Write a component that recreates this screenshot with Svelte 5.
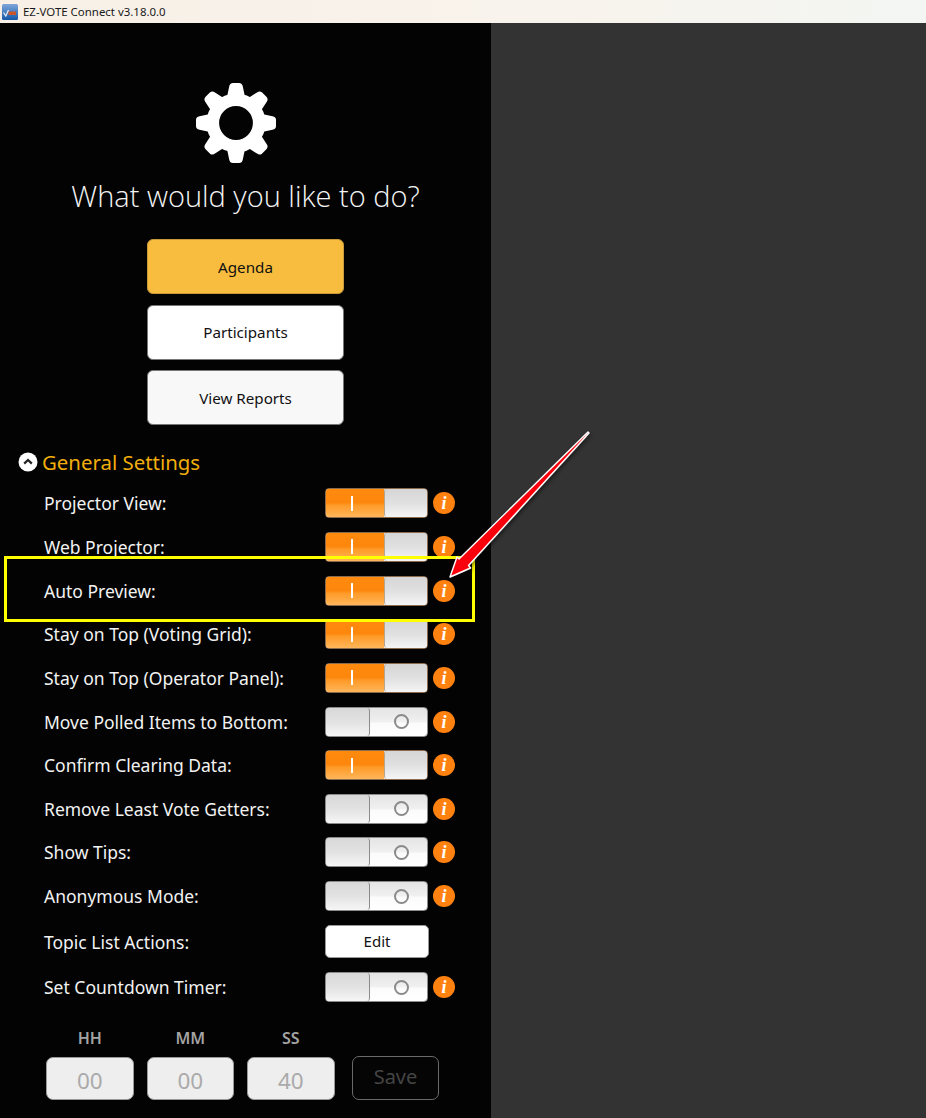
<script>
  const actions = [
    { label: 'Agenda', tone: 'amber' },
    { label: 'Participants', tone: 'white' },
    { label: 'View Reports', tone: 'pale' }
  ];

  const settings = [
    { label: 'Projector View:', on: true },
    { label: 'Web Projector:', on: true },
    { label: 'Auto Preview:', on: true },
    { label: 'Stay on Top (Voting Grid):', on: true },
    { label: 'Stay on Top (Operator Panel):', on: true },
    { label: 'Move Polled Items to Bottom:', on: false },
    { label: 'Confirm Clearing Data:', on: true },
    { label: 'Remove Least Vote Getters:', on: false },
    { label: 'Show Tips:', on: false },
    { label: 'Anonymous Mode:', on: false },
    { label: 'Topic List Actions:', edit: true },
    { label: 'Set Countdown Timer:', on: false }
  ];

  const timer = [
    { unit: 'HH', value: '00' },
    { unit: 'MM', value: '00' },
    { unit: 'SS', value: '40' }
  ];

  const teeth = [0, 45, 90, 135, 180, 225, 270, 315];
</script>

<div class="window">
  <header class="titlebar">
    <svg class="app-icon" viewBox="0 0 16 16" width="16" height="16">
      <defs>
        <linearGradient id="appBlue" x1="0" y1="0" x2="0" y2="1">
          <stop offset="0" stop-color="#7ea6da" />
          <stop offset="1" stop-color="#1458a8" />
        </linearGradient>
      </defs>
      <rect width="16" height="16" rx="1.5" fill="url(#appBlue)" />
      <rect x="6.5" y="7.5" width="7.5" height="3.5" fill="#c9562c" />
      <path d="M1.5 8.5 L3.8 12 L6.5 6" fill="none" stroke="#e8f0fa" stroke-width="1.2" />
    </svg>
    <span>EZ-VOTE Connect v3.18.0.0</span>
  </header>

  <div class="content">
    <aside class="panel">
      <svg class="gear" viewBox="-40 -40 80 80" width="80" height="80">
        {#each teeth as angle}
          <path
            d="M-9 -26 L-6.8 -36.5 Q-6.2 -40 -3 -40 L3 -40 Q6.2 -40 6.8 -36.5 L9 -26 Z"
            fill="#fff"
            transform="rotate({angle})"
          />
        {/each}
        <circle r="23.2" fill="none" stroke="#fff" stroke-width="12.6" />
      </svg>

      <h1>What would you like to do?</h1>

      <div class="actions">
        {#each actions as action}
          <button class="action {action.tone}">{action.label}</button>
        {/each}
      </div>

      <h2 class="section">
        <svg viewBox="0 0 20 20" width="20" height="20">
          <circle cx="10" cy="10" r="9.5" fill="#fff" />
          <path d="M6.2 11.6 L10 8 L13.8 11.6" fill="none" stroke="#222" stroke-width="2.2" />
        </svg>
        General Settings
      </h2>

      <div class="rows">
        {#each settings as row}
          <div class="row" class:edit-row={row.edit}>
            <span class="label">{row.label}</span>
            {#if row.edit}
              <button class="edit">Edit</button>
            {:else}
              <div class="toggle" class:on={row.on}>
                <div class="side">
                  {#if row.on}<i class="bar"></i>{/if}
                </div>
                <div class="side rest">
                  {#if !row.on}<i class="ring"></i>{/if}
                </div>
              </div>
              <span class="info">i</span>
            {/if}
          </div>
        {/each}
      </div>

      <div class="timer">
        {#each timer as field}
          <label class="field">
            <span>{field.unit}</span>
            <input value={field.value} disabled />
          </label>
        {/each}
        <button class="save" disabled>Save</button>
      </div>
    </aside>
    <main class="blank"></main>
  </div>

  <!-- annotations drawn on top of the screenshot -->
  <div class="highlight"></div>
  <svg class="arrow" viewBox="0 0 926 1118" width="926" height="1118">
    <defs>
      <filter id="arrowShadow" x="-20%" y="-20%" width="140%" height="140%">
        <feDropShadow dx="1" dy="2" stdDeviation="2" flood-color="#000" flood-opacity="0.55" />
      </filter>
    </defs>
    <polygon
      points="589,433 468.5,565.5 470.5,568 450,577 457,557 459,559 588,432"
      fill="#fa000a"
      stroke="#fff"
      stroke-width="1.4"
      stroke-linejoin="round"
      filter="url(#arrowShadow)"
    />
  </svg>
</div>

<style>
  :global(body) {
    margin: 0;
    background: #333;
  }

  .window {
    position: relative;
    width: 926px;
    height: 1118px;
    overflow: hidden;
    display: flex;
    flex-direction: column;
    font-family: "Noto Sans", "Open Sans", sans-serif;
  }

  .titlebar {
    flex: none;
    height: 23px;
    box-sizing: border-box;
    display: flex;
    align-items: center;
    gap: 5px;
    padding-left: 2px;
    background: linear-gradient(90deg, #f8f0e7, #f8f3ec 60%, #f3f6f3);
    font-size: 11.45px;
    color: #1a1a1a;
  }

  .content {
    flex: 1;
    display: flex;
  }

  .panel {
    width: 491px;
    background: #030303;
    display: flex;
    flex-direction: column;
    align-items: center;
  }

  .blank {
    flex: 1;
    background: #333;
  }

  .gear {
    margin: 60px 20px 0 0;
  }

  h1 {
    margin: 11px 0 0;
    font-size: 29px;
    line-height: 44px;
    font-weight: 300;
    font-family: "Open Sans", sans-serif;
    color: #f4f4f4;
  }

  .actions {
    margin-top: 21px;
    display: flex;
    flex-direction: column;
    gap: 10.5px;
  }

  .action {
    width: 197px;
    height: 55px;
    border: 1px solid #777;
    border-radius: 6px;
    font: 15.2px "Noto Sans", sans-serif;
    color: #111;
  }

  .amber { background: #f8bd3e; border-color: #c9993a; }
  .white { background: #fff; }
  .pale { background: #f8f8f8; }

  .section {
    align-self: flex-start;
    margin: 21px 0 0 18px;
    display: flex;
    align-items: center;
    gap: 4px;
    font-size: 20.4px;
    line-height: 32px;
    font-weight: 400;
    color: #f2ae0c;
  }

  .rows {
    align-self: stretch;
    margin-top: 3.5px;
    display: grid;
    grid-auto-rows: 43.65px;
  }

  .row {
    display: flex;
    align-items: center;
    padding-left: 44px;
  }

  /* the last two rows sit a little lower than the regular pitch */
  .edit-row {
    margin: 2.5px 0 -2.5px;
  }

  .row:last-child {
    margin: 3.7px 0 -3.7px;
  }

  .label {
    width: 281px;
    font-size: 17.5px;
    color: #f2f2f2;
  }

  .toggle {
    position: relative;
    width: 103px;
    height: 30px;
    box-sizing: border-box;
    display: flex;
    border: 1px solid #8b8b8b;
    border-radius: 4px;
    overflow: hidden;
    background: linear-gradient(#e4e4e4, #f0f0f0 48%, #fbfbfb 55%, #fff);
  }

  .toggle.on {
    border-color: #8a6b4d;
  }

  .side {
    width: 43px;
    display: flex;
    align-items: center;
    justify-content: center;
    border-right: 1px solid #8b8b8b;
    border-radius: 3px;
    background: linear-gradient(#d8d8d8, #e2e2e2 50%, #f6f6f6);
  }

  .side.rest {
    flex: 1;
    border-right: 0;
    background: none;
    padding-left: 5px;
  }

  .on .side {
    width: 58px;
    box-sizing: border-box;
    padding-right: 7px;
    border-right: 0;
    border-radius: 0;
    background: linear-gradient(#ff8a0e, #fd870c 48%, #ff9a28 58%, #ffb65a);
  }

  .on .side.rest {
    width: auto;
    padding: 0;
    border-left: 1px solid #b9a48c;
    border-radius: 3px;
    background: linear-gradient(#d6d6d6, #e0e0e0 50%, #f5f5f5);
  }

  .bar {
    width: 2px;
    height: 15px;
    background: #fff;
  }

  .ring {
    width: 11px;
    height: 11px;
    border: 2px solid #8a8a8a;
    border-radius: 50%;
  }

  .info {
    width: 22px;
    height: 22px;
    margin-left: 5px;
    border-radius: 50%;
    background: #ff8210;
    color: #fff;
    text-align: center;
    font: italic bold 18px/22px "Liberation Serif", serif;
  }

  .edit {
    width: 104px;
    height: 33px;
    margin-bottom: 2px;
    border: 1px solid #999;
    border-radius: 5px;
    background: #fff;
    font: 15px "Noto Sans", sans-serif;
    color: #111;
  }

  .timer {
    align-self: stretch;
    margin-top: 23px;
    padding-left: 46px;
    display: flex;
    align-items: flex-end;
    gap: 13px;
  }

  .field {
    width: 87.5px;
    display: flex;
    flex-direction: column;
    align-items: center;
    gap: 9px;
    font-size: 16px;
    line-height: 20px;
    font-weight: 600;
    color: #a3a3a3;
  }

  .field input {
    width: 100%;
    height: 43px;
    box-sizing: border-box;
    padding: 3px 0 0;
    border: 1px solid #999;
    border-radius: 7px;
    background: #eee;
    text-align: center;
    font: 22.5px "Noto Sans", sans-serif;
    color: #aaa;
  }

  .save {
    width: 87px;
    height: 44px;
    margin-left: 4.5px;
    padding-bottom: 5px;
    border: 1px solid #6a6a6a;
    border-radius: 7px;
    background: #050505;
    font: 20px "Noto Sans", sans-serif;
    color: #444;
  }

  .highlight {
    position: absolute;
    left: 4px;
    top: 556px;
    width: 465px;
    height: 60px;
    border: 3px solid #ffff00;
  }

  .arrow {
    position: absolute;
    left: 0;
    top: 0;
    pointer-events: none;
  }
</style>
